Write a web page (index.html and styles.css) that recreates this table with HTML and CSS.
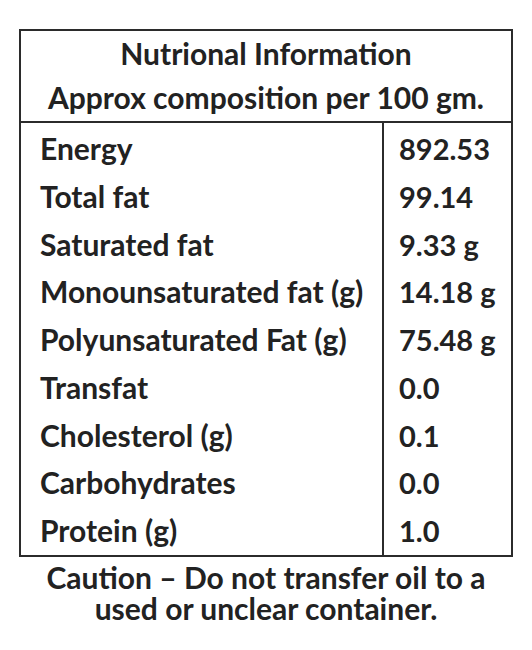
FILE: index.html
```html
<!DOCTYPE html>
<html lang="en">
<head>
    <meta charset="UTF-8">
    <title>Nutritional Information</title>
    <link rel="stylesheet" href="styles.css">
</head>
<body>
<div class="label">
    <table class="facts">
        <thead>
            <tr>
                <th colspan="2">Nutrional Information<br>Approx composition per 100 gm.</th>
            </tr>
        </thead>
        <tbody>
            <tr><td class="name">Energy</td><td class="val">892.53</td></tr>
            <tr><td class="name">Total fat</td><td class="val">99.14</td></tr>
            <tr><td class="name">Saturated fat</td><td class="val">9.33 g</td></tr>
            <tr><td class="name">Monounsaturated fat (g)</td><td class="val">14.18 g</td></tr>
            <tr><td class="name">Polyunsaturated Fat (g)</td><td class="val">75.48 g</td></tr>
            <tr><td class="name">Transfat</td><td class="val">0.0</td></tr>
            <tr><td class="name">Cholesterol (g)</td><td class="val">0.1</td></tr>
            <tr><td class="name">Carbohydrates</td><td class="val">0.0</td></tr>
            <tr><td class="name">Protein (g)</td><td class="val">1.0</td></tr>
        </tbody>
    </table>
    <div class="caution">
        <div class="line">Caution – Do not transfer oil to a</div>
        <div class="line">used or unclear container.</div>
    </div>
</div>
</body>
</html>
```

FILE: styles.css
```css
body {
  font-family: 'Lato', 'Liberation Sans', sans-serif;
  font-weight: bold;
  color: #222;
  background-color: #fff;
  margin: 0;
  padding: 29px 0 0 19px;
}
.label {
  width: 494px;
}
.facts {
  width: 100%;
  border-collapse: collapse;
  border: 2px solid #2b2b2b;
}
.facts th {
  font-size: 30px;
  line-height: 44px;
  padding: 0 0 2px;
  text-align: center;
  border-bottom: 2px solid #2b2b2b;
}
.facts td {
  font-size: 30px;
  line-height: 47.75px;
  padding: 0;
}
.facts tbody tr:first-child td {
  padding-top: 2px;
}
.name {
  width: 342px;
  padding-left: 19px !important;
  border-right: 2px solid #2b2b2b;
}
.facts td.val {
  font-size: 29px;
  padding-left: 15px;
}
.caution {
  font-size: 30px;
  text-align: center;
  margin-top: 5px;
}
.caution .line {
  height: 31px;
  line-height: 31px;
}
```
